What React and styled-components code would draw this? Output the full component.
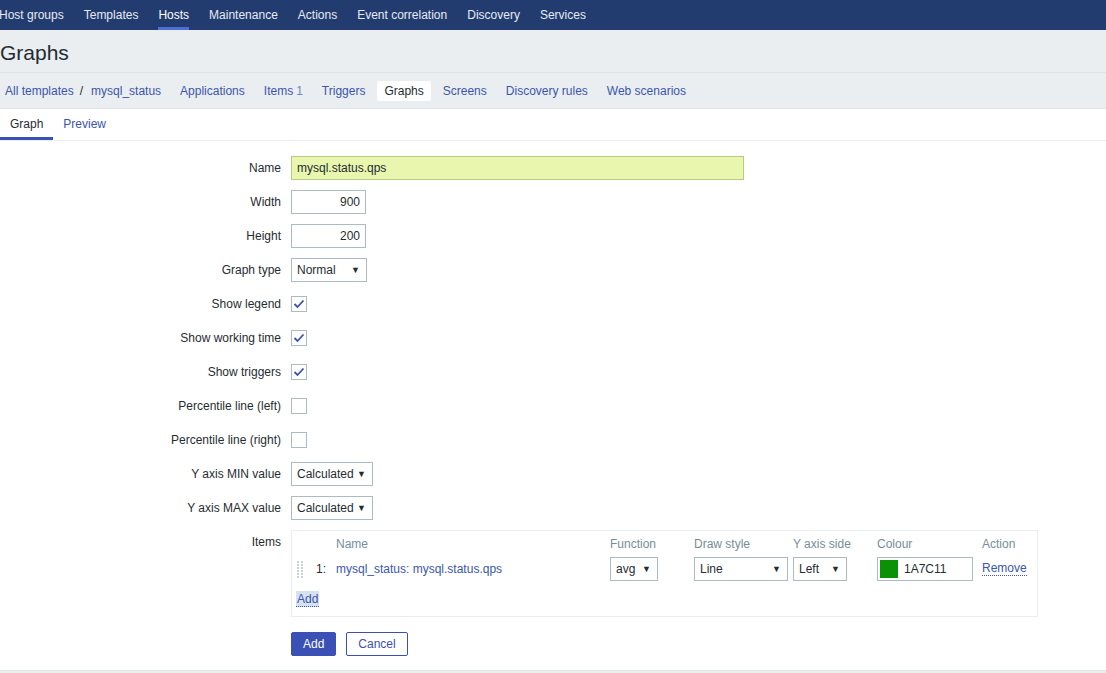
import React from 'react';
import styled, { createGlobalStyle } from 'styled-components';

const GlobalStyle = createGlobalStyle`
  html, body {
    margin: 0;
    padding: 0;
    background: #ffffff;
    font-family: "Liberation Sans", Arial, sans-serif;
    font-size: 12px;
    color: #1f2c33;
  }
  * { box-sizing: border-box; }
`;

const LINK = '#3a55ad';
const BORDER = '#acbbc2';
const PRIMARY = '#3a50b5';

const Page = styled.div`
  width: 100%;
  min-height: 673px;
  overflow: hidden;
  display: flex;
  flex-direction: column;
`;

const TopNav = styled.nav`
  height: 30px;
  background: #233c6f;
  display: flex;
  align-items: stretch;
`;

const NavItem = styled.a`
  position: relative;
  padding: 0 10px;
  line-height: 30px;
  font-size: 12px;
  color: ${p => (p.$active ? '#ffffff' : '#e6ebf3')};
  cursor: pointer;
  white-space: nowrap;
  &:first-child {
    margin-left: -11px;
  }
  &::after {
    content: '';
    display: ${p => (p.$active ? 'block' : 'none')};
    position: absolute;
    left: 10px;
    right: 10px;
    bottom: 0;
    height: 3px;
    background: #4d6fd8;
  }
`;

const Header = styled.header`
  height: 43px;
  background: #ebeef0;
  border-bottom: 1px solid #dfe4e7;
  display: flex;
  align-items: center;
`;

const Title = styled.h1`
  margin: 0;
  font-size: 21px;
  font-weight: normal;
  color: #1f2c33;
  line-height: 1;
  padding-top: 2px;
`;

const SubNav = styled.div`
  height: 36px;
  background: #ebeef0;
  border-bottom: 1px solid #dfe4e7;
  display: flex;
  align-items: center;
  gap: 5px;
`;

const Crumbs = styled.div`
  display: flex;
  align-items: center;
  padding: 0 7px 0 5px;
`;

const Separator = styled.span`
  margin: 0 8px 0 6px;
  color: #1f2c33;
`;

const SubLink = styled.a`
  padding: 4px 7px;
  line-height: 12px;
  color: ${p => (p.$active ? '#1f2c33' : LINK)};
  background: ${p => (p.$active ? '#ffffff' : 'transparent')};
  border-radius: 2px;
  cursor: pointer;
  white-space: nowrap;
`;

const Plain = styled.a`
  color: ${LINK};
  cursor: pointer;
`;

const Count = styled.span`
  color: #7289bf;
  margin-left: 3px;
`;

const Tabs = styled.div`
  height: 32px;
  display: flex;
  align-items: stretch;
  border-bottom: 1px solid #ebeef0;
`;

const Tab = styled.a`
  padding: 0 10px;
  line-height: 31px;
  color: ${p => (p.$active ? '#1f2c33' : LINK)};
  box-shadow: ${p => (p.$active ? `inset 0 -3px 0 ${PRIMARY}` : 'none')};
  cursor: pointer;
`;

const Form = styled.form`
  display: grid;
  grid-template-columns: 281px 1fr;
  column-gap: 10px;
  row-gap: 10px;
  padding: 15px 0 14px;
`;

const Label = styled.label`
  text-align: right;
  line-height: 24px;
  color: #1f2c33;
  white-space: nowrap;
  align-self: start;
`;

const Field = styled.div`
  min-height: 24px;
  display: flex;
  align-items: center;
  margin-top: ${p => p.$offset || 0}px;
  gap: 10px;
`;

const Input = styled.input`
  width: ${p => p.$width}px;
  height: 24px;
  padding: 0 5px;
  border: 1px solid ${p => (p.$filled ? '#b9c98a' : BORDER)};
  background: ${p => (p.$filled ? '#e9f6ae' : '#ffffff')};
  font-family: inherit;
  font-size: 12px;
  color: #1f2c33;
  text-align: ${p => (p.$right ? 'right' : 'left')};
  outline: none;
`;

const SelectBox = styled.div`
  width: ${p => p.$width}px;
  height: 24px;
  padding: 0 6px 0 5px;
  border: 1px solid ${BORDER};
  background: #ffffff;
  display: flex;
  align-items: center;
  justify-content: space-between;
  color: #1f2c33;
  cursor: pointer;
`;

const Arrow = styled.span`
  font-size: 9px;
  color: #1f2c33;
`;

const Check = styled.span`
  width: 16px;
  height: 16px;
  border: 1px solid ${BORDER};
  background: #ffffff;
  display: flex;
  align-items: center;
  justify-content: center;
`;

const ItemsBox = styled.div`
  width: 747px;
  border: 1px solid #ebeef0;
  padding: 5px 4px 9px;
  display: grid;
  grid-template-columns: 20px 20px 274px 84px 99px 84px 105px 1fr;
  row-gap: 5px;
  align-items: center;
`;

const HeadCell = styled.div`
  color: #768d99;
  line-height: 16px;
  grid-column: ${p => p.$col || 'auto'};
`;

const Cell = styled.div`
  display: flex;
  align-items: center;
  height: 24px;
`;

const AddRow = styled.div`
  grid-column: 1 / -1;
  margin-top: 5px;
`;

const FocusLink = styled.a`
  display: inline-block;
  padding: 1px 1px 0;
  background: #d8e1f2;
  color: ${LINK};
  border-bottom: 1px dotted ${LINK};
  line-height: 14px;
  cursor: pointer;
`;

const DottedLink = styled.a`
  color: ${LINK};
  border-bottom: 1px dotted ${LINK};
  line-height: 13px;
  cursor: pointer;
`;

const ColourInput = styled.div`
  width: 96px;
  height: 24px;
  border: 1px solid ${BORDER};
  display: flex;
  align-items: center;
  padding-left: 2px;
  gap: 6px;
`;

const Swatch = styled.span`
  width: 18px;
  height: 18px;
  background: ${p => p.$color};
`;

const Button = styled.button`
  height: 24px;
  padding: 0 11px;
  border: 1px solid ${PRIMARY};
  border-radius: 2px;
  background: ${p => (p.$primary ? PRIMARY : '#ffffff')};
  color: ${p => (p.$primary ? '#ffffff' : PRIMARY)};
  font-family: inherit;
  font-size: 12px;
  cursor: pointer;
`;

const Footer = styled.footer`
  flex: 1;
  border-top: 1px solid #dfe4e7;
  background: #ebeef0;
`;

const CheckMark = () => (
  <svg width="12" height="10" viewBox="0 0 12 10">
    <polyline points="1.5,5 4.5,8 10.5,1.5" fill="none" stroke="#3c52b0" strokeWidth="1.8" />
  </svg>
);

const DragHandle = () => (
  <svg width="8" height="18" viewBox="0 0 8 18">
    {[0, 1, 2, 3, 4, 5].map(r =>
      [0, 1].map(c => (
        <rect key={`${r}-${c}`} x={1 + c * 4} y={1 + r * 3} width="2" height="2" fill="#c8d0d5" />
      ))
    )}
  </svg>
);

const Select = ({ width, value }) => (
  <SelectBox $width={width}>
    <span>{value}</span>
    <Arrow>▼</Arrow>
  </SelectBox>
);

const navItems = ['Host groups', 'Templates', 'Hosts', 'Maintenance', 'Actions', 'Event correlation', 'Discovery', 'Services'];

const subItems = [
  { label: 'Applications' },
  { label: 'Items', count: 1 },
  { label: 'Triggers' },
  { label: 'Graphs', active: true },
  { label: 'Screens' },
  { label: 'Discovery rules' },
  { label: 'Web scenarios' },
];

const checks = [
  ['Show legend', true],
  ['Show working time', true],
  ['Show triggers', true],
  ['Percentile line (left)', false],
  ['Percentile line (right)', false],
];

const App = () => (
  <Page>
    <GlobalStyle />
    <TopNav>
      {navItems.map(n => (
        <NavItem key={n} $active={n === 'Hosts'}>{n}</NavItem>
      ))}
    </TopNav>

    <Header>
      <Title>Graphs</Title>
    </Header>

    <SubNav>
      <Crumbs>
        <Plain>All templates</Plain>
        <Separator>/</Separator>
        <Plain>mysql_status</Plain>
      </Crumbs>
      {subItems.map(s => (
        <SubLink key={s.label} $active={s.active}>
          {s.label}
          {s.count && <Count>{s.count}</Count>}
        </SubLink>
      ))}
    </SubNav>

    <Tabs>
      <Tab $active>Graph</Tab>
      <Tab>Preview</Tab>
    </Tabs>

    <Form onSubmit={e => e.preventDefault()}>
      <Label>Name</Label>
      <Field><Input $width={453} $filled defaultValue="mysql.status.qps" /></Field>

      <Label>Width</Label>
      <Field><Input $width={75} $right defaultValue="900" /></Field>

      <Label>Height</Label>
      <Field><Input $width={75} $right defaultValue="200" /></Field>

      <Label>Graph type</Label>
      <Field><Select width={76} value="Normal" /></Field>

      {checks.map(([label, on]) => (
        <React.Fragment key={label}>
          <Label>{label}</Label>
          <Field><Check>{on && <CheckMark />}</Check></Field>
        </React.Fragment>
      ))}

      <Label>Y axis MIN value</Label>
      <Field><Select width={82} value="Calculated" /></Field>

      <Label>Y axis MAX value</Label>
      <Field><Select width={82} value="Calculated" /></Field>

      <Label>Items</Label>
      <Field>
        <ItemsBox>
          <HeadCell $col="3">Name</HeadCell>
          <HeadCell>Function</HeadCell>
          <HeadCell>Draw style</HeadCell>
          <HeadCell>Y axis side</HeadCell>
          <HeadCell>Colour</HeadCell>
          <HeadCell>Action</HeadCell>

          <Cell><DragHandle /></Cell>
          <Cell>1:</Cell>
          <Cell><Plain>mysql_status: mysql.status.qps</Plain></Cell>
          <Cell><Select width={48} value="avg" /></Cell>
          <Cell><Select width={94} value="Line" /></Cell>
          <Cell><Select width={54} value="Left" /></Cell>
          <Cell>
            <ColourInput>
              <Swatch $color="#0b9106" />
              <span>1A7C11</span>
            </ColourInput>
          </Cell>
          <Cell><DottedLink>Remove</DottedLink></Cell>

          <AddRow><FocusLink>Add</FocusLink></AddRow>
        </ItemsBox>
      </Field>

      <span />
      <Field $offset={5}>
        <Button $primary type="submit">Add</Button>
        <Button type="button">Cancel</Button>
      </Field>
    </Form>

    <Footer />
  </Page>
);

export default App;
